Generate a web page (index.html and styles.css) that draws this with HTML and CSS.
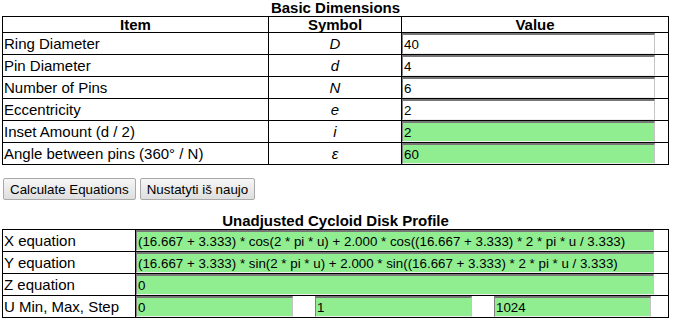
FILE: index.html
```html
<!DOCTYPE html>
<html lang="en">
<head>
    <meta charset="UTF-8">
    <title>Cycloid Disk Calculator</title>
    <link rel="stylesheet" href="styles.css">
</head>
<body>
    <table class="grid">
        <caption>Basic Dimensions</caption>
        <colgroup>
            <col class="col-item">
            <col class="col-symbol">
            <col class="col-value">
        </colgroup>
        <tr>
            <th>Item</th>
            <th>Symbol</th>
            <th>Value</th>
        </tr>
        <tr>
            <td>Ring Diameter</td>
            <td class="symbol">D</td>
            <td class="value"><input class="field" type="text" value="40"></td>
        </tr>
        <tr>
            <td>Pin Diameter</td>
            <td class="symbol">d</td>
            <td class="value"><input class="field" type="text" value="4"></td>
        </tr>
        <tr>
            <td>Number of Pins</td>
            <td class="symbol">N</td>
            <td class="value"><input class="field" type="text" value="6"></td>
        </tr>
        <tr>
            <td>Eccentricity</td>
            <td class="symbol">e</td>
            <td class="value"><input class="field" type="text" value="2"></td>
        </tr>
        <tr>
            <td>Inset Amount (d / 2)</td>
            <td class="symbol">i</td>
            <td class="value"><input class="field calc" type="text" value="2" readonly></td>
        </tr>
        <tr>
            <td>Angle between pins (360° / N)</td>
            <td class="symbol">ε</td>
            <td class="value"><input class="field calc" type="text" value="60" readonly></td>
        </tr>
    </table>

    <div class="actions">
        <button>Calculate Equations</button>
        <button>Nustatyti iš naujo</button>
    </div>

    <table class="grid profile">
        <caption>Unadjusted Cycloid Disk Profile</caption>
        <colgroup>
            <col class="col-label">
            <col class="col-rest">
        </colgroup>
        <tr>
            <td>X equation</td>
            <td class="value"><input class="field calc wide" type="text" value="(16.667 + 3.333) * cos(2 * pi * u) + 2.000 * cos((16.667 + 3.333) * 2 * pi * u / 3.333)" readonly></td>
        </tr>
        <tr>
            <td>Y equation</td>
            <td class="value"><input class="field calc wide" type="text" value="(16.667 + 3.333) * sin(2 * pi * u) + 2.000 * sin((16.667 + 3.333) * 2 * pi * u / 3.333)" readonly></td>
        </tr>
        <tr>
            <td>Z equation</td>
            <td class="value"><input class="field calc wide" type="text" value="0" readonly></td>
        </tr>
        <tr>
            <td>U Min, Max, Step</td>
            <td class="value">
                <div class="range">
                    <input class="field calc third" type="text" value="0" readonly>
                    <input class="field calc third" type="text" value="1" readonly>
                    <input class="field calc third" type="text" value="1024" readonly>
                </div>
            </td>
        </tr>
    </table>
</body>
</html>
```

FILE: styles.css
```css
body {
    margin: 0;
    font-family: "Liberation Sans", Arial, sans-serif;
    font-size: 15px;
    color: #000;
    background: #fff;
}
.grid {
    width: 666px;
    margin-left: 2px;
    border-collapse: collapse;
    table-layout: fixed;
}
caption {
    font-weight: bold;
    line-height: 16px;
    height: 16px;
}
.grid th {
    border: 1px solid #000;
    padding: 0 1px;
    height: 15px;
    line-height: 15px;
    font-weight: bold;
}
.grid td {
    border: 1px solid #000;
    padding: 0 1px;
    height: 21px;
    line-height: 17px;
    white-space: nowrap;
}
.col-item { width: 266px; }
.col-symbol { width: 133px; }
.col-value { width: 267px; }
.col-label { width: 133px; }
.col-rest { width: 533px; }
.symbol {
    text-align: center;
    font-style: italic;
}
.grid td.value {
    padding: 0;
}
.field {
    display: block;
    box-sizing: border-box;
    width: 253px;
    height: 21px;
    margin: 0;
    padding: 0 1px;
    font-family: "Liberation Sans", Arial, sans-serif;
    font-size: 13.33px;
    color: #000;
    background: #fff;
    border-style: solid;
    border-width: 2px 1px 1px 1px;
    border-color: #777 #c4c4c4 #eee #808080;
    outline: none;
}
.calc {
    background: #90ee90;
}
.wide {
    width: 518px;
}
.range {
    display: flex;
    gap: 22px;
}
.third {
    width: 157px;
}
.actions {
    margin: 13px 0 13px 3px;
}
.actions button {
    height: 22px;
    padding: 1px 6px;
    font-family: "Liberation Sans", Arial, sans-serif;
    font-size: 13.33px;
    color: #000;
    background: linear-gradient(#f6f6f6, #dedede);
    border: 1px solid #a9a9a9;
    border-radius: 2px;
}
```
